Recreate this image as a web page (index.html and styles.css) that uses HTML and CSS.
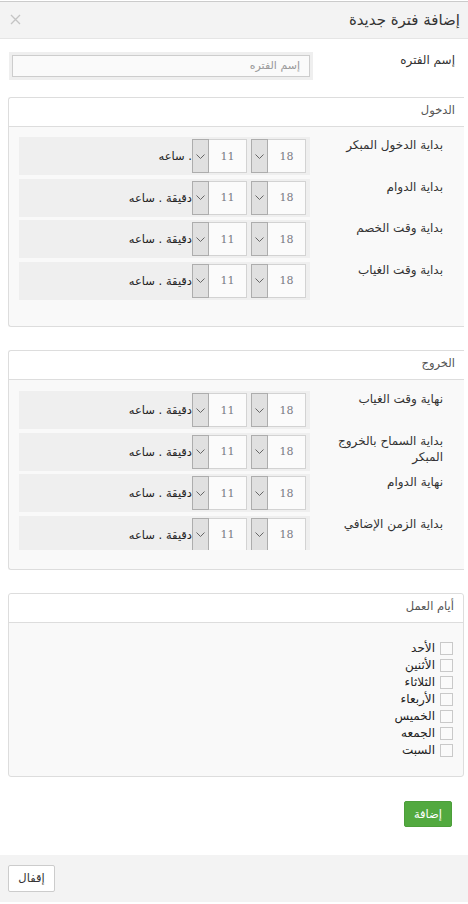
FILE: index.html
```html
<!DOCTYPE html>
<html lang="ar" dir="rtl">
<head>
<meta charset="utf-8">
<title>إضافة فترة جديدة</title>
<link rel="stylesheet" href="styles.css">
</head>
<body>
<div class="modal">
  <div class="modal-header">
    <h4 class="modal-title">إضافة فترة جديدة</h4>
    <span class="close"><svg width="11" height="11" viewBox="0 0 11 11"><path d="M1 1L10 10M10 1L1 10" stroke="#c4c4c4" stroke-width="1.3" fill="none"/></svg></span>
  </div>
  <div class="modal-body">
    <div class="name-row">
      <label class="name-label">إسم الفتره</label>
      <div class="input-wrap"><div class="input">إسم الفتره</div></div>
    </div>

    <div class="panel panel-open panel-in">
      <div class="panel-heading">الدخول</div>
      <div class="panel-body pb-in">
        <div class="rows">
          <div class="row"><div class="row-label">بداية الدخول المبكر</div><div class="bar"><div class="sel"><span class="val">18</span><span class="arrow"><svg width="9" height="5" viewBox="0 0 9 5"><path d="M0.5 0.5L4.5 4.5L8.5 0.5" stroke="#666" fill="none"/></svg></span></div><div class="sel"><span class="val">11</span><span class="arrow"><svg width="9" height="5" viewBox="0 0 9 5"><path d="M0.5 0.5L4.5 4.5L8.5 0.5" stroke="#666" fill="none"/></svg></span></div><span class="unit">. ساعه</span></div></div>
          <div class="row"><div class="row-label">بداية الدوام</div><div class="bar"><div class="sel"><span class="val">18</span><span class="arrow"><svg width="9" height="5" viewBox="0 0 9 5"><path d="M0.5 0.5L4.5 4.5L8.5 0.5" stroke="#666" fill="none"/></svg></span></div><div class="sel"><span class="val">11</span><span class="arrow"><svg width="9" height="5" viewBox="0 0 9 5"><path d="M0.5 0.5L4.5 4.5L8.5 0.5" stroke="#666" fill="none"/></svg></span></div><span class="unit">دقيقة . ساعه</span></div></div>
          <div class="row"><div class="row-label">بداية وقت الخصم</div><div class="bar"><div class="sel"><span class="val">18</span><span class="arrow"><svg width="9" height="5" viewBox="0 0 9 5"><path d="M0.5 0.5L4.5 4.5L8.5 0.5" stroke="#666" fill="none"/></svg></span></div><div class="sel"><span class="val">11</span><span class="arrow"><svg width="9" height="5" viewBox="0 0 9 5"><path d="M0.5 0.5L4.5 4.5L8.5 0.5" stroke="#666" fill="none"/></svg></span></div><span class="unit">دقيقة . ساعه</span></div></div>
          <div class="row"><div class="row-label">بداية وقت الغياب</div><div class="bar"><div class="sel"><span class="val">18</span><span class="arrow"><svg width="9" height="5" viewBox="0 0 9 5"><path d="M0.5 0.5L4.5 4.5L8.5 0.5" stroke="#666" fill="none"/></svg></span></div><div class="sel"><span class="val">11</span><span class="arrow"><svg width="9" height="5" viewBox="0 0 9 5"><path d="M0.5 0.5L4.5 4.5L8.5 0.5" stroke="#666" fill="none"/></svg></span></div><span class="unit">دقيقة . ساعه</span></div></div>
        </div>
      </div>
    </div>

    <div class="panel panel-open">
      <div class="panel-heading">الخروج</div>
      <div class="panel-body pb-out">
        <div class="rows rows-clip">
          <div class="row"><div class="row-label">نهاية وقت الغياب</div><div class="bar"><div class="sel"><span class="val">18</span><span class="arrow"><svg width="9" height="5" viewBox="0 0 9 5"><path d="M0.5 0.5L4.5 4.5L8.5 0.5" stroke="#666" fill="none"/></svg></span></div><div class="sel"><span class="val">11</span><span class="arrow"><svg width="9" height="5" viewBox="0 0 9 5"><path d="M0.5 0.5L4.5 4.5L8.5 0.5" stroke="#666" fill="none"/></svg></span></div><span class="unit">دقيقة . ساعه</span></div></div>
          <div class="row"><div class="row-label">بداية السماح بالخروج المبكر</div><div class="bar"><div class="sel"><span class="val">18</span><span class="arrow"><svg width="9" height="5" viewBox="0 0 9 5"><path d="M0.5 0.5L4.5 4.5L8.5 0.5" stroke="#666" fill="none"/></svg></span></div><div class="sel"><span class="val">11</span><span class="arrow"><svg width="9" height="5" viewBox="0 0 9 5"><path d="M0.5 0.5L4.5 4.5L8.5 0.5" stroke="#666" fill="none"/></svg></span></div><span class="unit">دقيقة . ساعه</span></div></div>
          <div class="row"><div class="row-label">نهاية الدوام</div><div class="bar"><div class="sel"><span class="val">18</span><span class="arrow"><svg width="9" height="5" viewBox="0 0 9 5"><path d="M0.5 0.5L4.5 4.5L8.5 0.5" stroke="#666" fill="none"/></svg></span></div><div class="sel"><span class="val">11</span><span class="arrow"><svg width="9" height="5" viewBox="0 0 9 5"><path d="M0.5 0.5L4.5 4.5L8.5 0.5" stroke="#666" fill="none"/></svg></span></div><span class="unit">دقيقة . ساعه</span></div></div>
          <div class="row"><div class="row-label">بداية الزمن الإضافي</div><div class="bar"><div class="sel"><span class="val">18</span><span class="arrow"><svg width="9" height="5" viewBox="0 0 9 5"><path d="M0.5 0.5L4.5 4.5L8.5 0.5" stroke="#666" fill="none"/></svg></span></div><div class="sel"><span class="val">11</span><span class="arrow"><svg width="9" height="5" viewBox="0 0 9 5"><path d="M0.5 0.5L4.5 4.5L8.5 0.5" stroke="#666" fill="none"/></svg></span></div><span class="unit">دقيقة . ساعه</span></div></div>
        </div>
      </div>
    </div>

    <div class="panel panel-days">
      <div class="panel-heading">أيام العمل</div>
      <div class="panel-body pb-days">
        <div class="day"><span class="cb"></span><span>الأحد</span></div>
        <div class="day"><span class="cb"></span><span>الأثنين</span></div>
        <div class="day"><span class="cb"></span><span>الثلاثاء</span></div>
        <div class="day"><span class="cb"></span><span>الأربعاء</span></div>
        <div class="day"><span class="cb"></span><span>الخميس</span></div>
        <div class="day"><span class="cb"></span><span>الجمعه</span></div>
        <div class="day"><span class="cb"></span><span>السبت</span></div>
      </div>
    </div>

    <div class="actions"><button class="btn btn-success">إضافة</button></div>
  </div>
  <div class="modal-footer">
    <button class="btn btn-default">إقفال</button>
  </div>
</div>
</body>
</html>
```
FILE: styles.css
```css
* { box-sizing: border-box; }
html, body { margin: 0; padding: 0; background: #fff; }
body {
  width: 468px;
  height: 904px;
  overflow: hidden;
  font-family: "DejaVu Sans", "Noto Sans", sans-serif;
  font-size: 12px;
  color: #333;
}
.modal { width: 468px; }
.modal-header {
  margin-top: 1px;
  height: 38px;
  border-top: 1px solid #cbcbcb;
  border-bottom: 1px solid #e5e5e5;
  background: #f3f3f3;
  display: flex;
  align-items: center;
  justify-content: space-between;
  padding: 0 8px 0 10px;
}
.modal-title {
  margin: 0;
  font-weight: normal;
  font-size: 15px;
  color: #333;
}
.close { display: flex; align-items: center; height: 11px; margin-top: -2px; }

.modal-body { padding: 13px 4px 0 8px; }

.name-row {
  display: flex;
  align-items: flex-start;
  justify-content: space-between;
  margin-bottom: 17px;
}
.name-label { padding-right: 9px; padding-top: 1px; font-size: 12px; }
.input-wrap {
  width: 304px;
  height: 28px;
  margin-left: 1px;
  padding: 3px;
  background: #efefef;
}
.input {
  height: 22px;
  border: 1px solid #cdcdcd;
  background: #fafafa;
  color: #999;
  font-size: 11px;
  padding: 3px 9px 0 0;
}

.panel {
  border: 1px solid #dddddd;
  border-radius: 3px;
  margin-bottom: 23px;
  background: #f9f9f9;
}
.panel-open { border-right: 0; border-radius: 3px 0 0 3px; }
.panel-heading {
  height: 29px;
  background: #fff;
  border-bottom: 1px solid #dddddd;
  border-radius: 3px 3px 0 0;
  padding: 5px 9px 0 0;
  color: #555;
  font-size: 11.5px;
}
.panel-open .panel-heading { border-radius: 0; border-top-left-radius: 3px; }
.panel-body { padding-left: 10px; }
.pb-in { padding-top: 10px; padding-bottom: 26px; }
.pb-out { padding-top: 11.5px; padding-bottom: 19px; }
.rows { display: flex; flex-direction: column; gap: 3.5px; }
.rows-clip { height: 158.5px; overflow: hidden; }

.row { display: flex; align-items: flex-start; height: 38px; flex: none; }
.row-label {
  width: 154px;
  padding-right: 21px;
  padding-left: 23px;
  line-height: 16px;
  font-size: 12px;
  color: #333;
}
.bar {
  width: 291px;
  height: 38px;
  background: #efefef;
  display: flex;
  align-items: center;
  gap: 4px;
  padding-right: 4px;
}
.sel {
  direction: ltr;
  display: flex;
  flex-direction: row-reverse;
  width: 55px;
  height: 34px;
  border: 1px solid #d3d3d3;
  background: #fbfbfb;
}
.val {
  flex: 1;
  display: flex;
  align-items: center;
  justify-content: center;
  font-family: "DejaVu Serif", "Liberation Serif", serif;
  font-size: 11px;
  color: #7a7a85;
}
.arrow {
  width: 17px;
  border: 1px solid #adadad;
  margin: -1px 0 -1px -1px;
  background: #e0e0e0;
  display: flex;
  align-items: center;
  justify-content: center;
}
.unit { margin-right: -4px; font-size: 11.5px; color: #222; white-space: nowrap; }

.panel-days { margin-bottom: 24px; }
.pb-days { padding: 17px 10px 17px 0; }
.day { display: flex; align-items: center; height: 17px; gap: 5px; font-size: 12px; color: #222; }
.cb {
  width: 13px;
  height: 13px;
  flex: none;
  border: 1px solid #c9c9c9;
  background: #fafafa;
}

.actions { display: flex; justify-content: flex-start; padding-right: 12px; margin-bottom: 28px; }
.btn {
  font-family: "DejaVu Sans", "Noto Sans", sans-serif;
  font-size: 11.5px;
  border-radius: 2px;
  cursor: pointer;
}
.btn-success {
  width: 48px;
  height: 26px;
  background: #52a93f;
  border: 1px solid #4c9e3a;
  color: #fff;
  padding: 0;
}
.modal-footer {
  height: 47px;
  background: #f3f3f3;
  display: flex;
  align-items: center;
  justify-content: flex-end;
  padding-left: 8px;
}
.btn-default {
  width: 47px;
  height: 27px;
  background: #fff;
  border: 1px solid #cccccc;
  color: #333;
  padding: 0;
}
```
